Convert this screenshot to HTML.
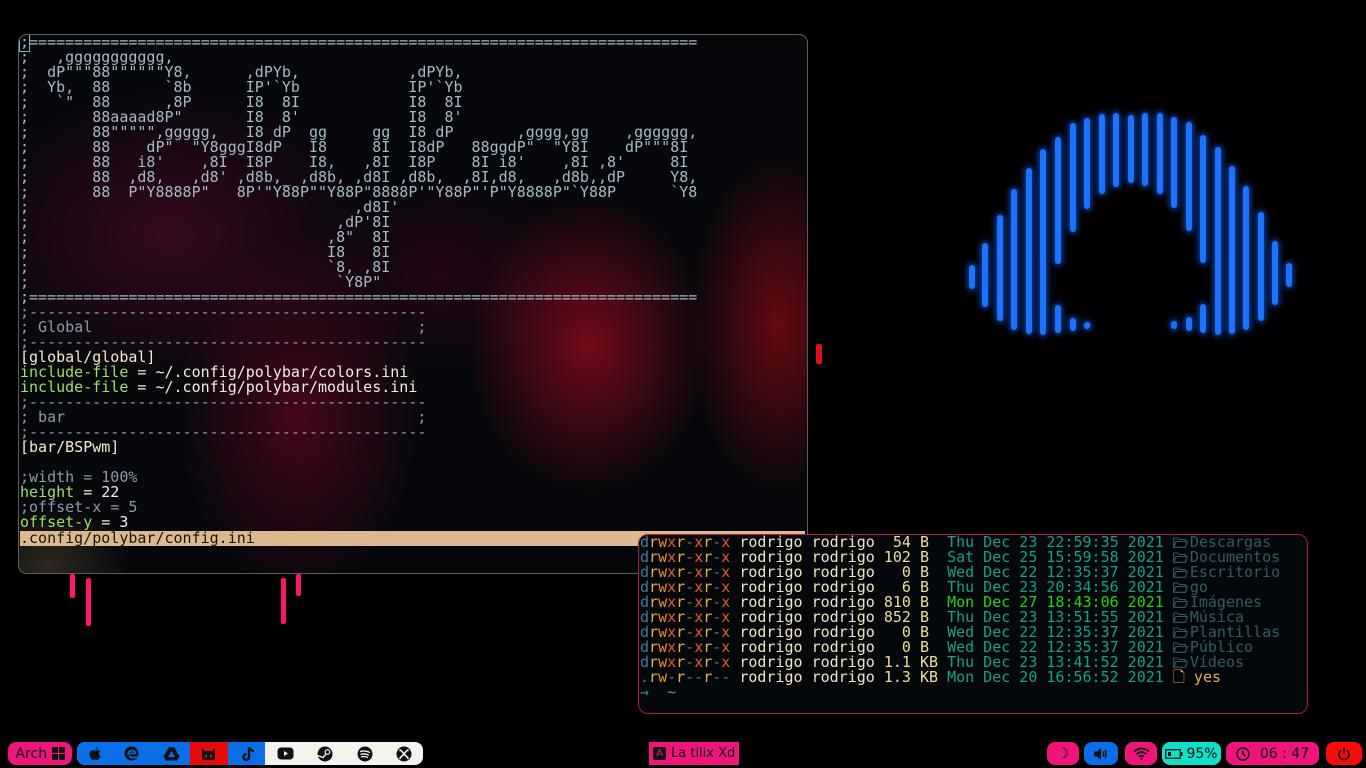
<!DOCTYPE html>
<html><head><meta charset="utf-8"><style>
*{margin:0;padding:0;box-sizing:border-box}
body{width:1366px;height:768px;background:#000;overflow:hidden;position:relative;font-family:"DejaVu Sans Mono","Liberation Mono",monospace}
pre{font-family:"DejaVu Sans Mono","Liberation Mono",monospace;font-size:15px;line-height:15px;position:absolute;white-space:pre}
#t1{position:absolute;left:18px;top:34px;width:790px;height:540px;border:1.5px solid #5c5c5c;border-radius:9px;overflow:hidden;
background:
radial-gradient(ellipse 120px 150px at 570px 310px,rgba(150,10,30,.75),transparent),
radial-gradient(ellipse 90px 170px at 760px 290px,rgba(140,10,20,.7),transparent),
radial-gradient(ellipse 200px 150px at 150px 200px,rgba(90,10,45,.55),transparent),
radial-gradient(ellipse 120px 180px at 280px 380px,rgba(110,5,40,.6),transparent),
radial-gradient(ellipse 150px 100px at 420px 240px,rgba(60,5,30,.5),transparent),
radial-gradient(ellipse 80px 60px at 30px 530px,rgba(120,100,70,.35),transparent),
#07080c}
.a{color:#a4b9c8}.c{color:#8a9bab}.g{color:#9be16a}.w{color:#efeee6}.y{color:#f3ead0}
#sb{position:absolute;left:1px;top:496px;width:785px;height:15px;background:#dcb88e}
#t2{position:absolute;left:638px;top:534px;width:670px;height:180px;border:1.5px solid #b0154d;border-radius:10px;background:#05080b;overflow:hidden}
.pd{color:#3b7f9c}.pr{color:#e6b04a}.pw{color:#f08a2a}.px{color:#e85a2a}.pm{color:#6f6f6f}.u{color:#f1e4c4}.s{color:#f0dca0}.dt{color:#14a08a}.dg{color:#22d411}.fd{color:#2f5c68}.fy{color:#e4a664}
.f{display:inline-block;width:15px;height:11px;vertical-align:-1px;margin-right:2px}
.bar{position:absolute;width:6px;border-radius:3px;background:#1a72ff;box-shadow:0 0 6px 2px rgba(20,100,255,.6)}
.pk{position:absolute;background:#ff1470;width:5px;border-radius:2px}
.pill{position:absolute;top:742px;height:23px;border-radius:8px;display:flex;align-items:center;justify-content:center;font-family:"DejaVu Sans","Liberation Sans",sans-serif;font-size:13px;color:#111}
.ic{position:absolute;top:745px;width:17px;height:17px;display:flex;align-items:center;justify-content:center}
</style></head><body>

<div id="t1">
<pre style="left:1px;top:0px"><span class="a"><span style="outline:1px solid #7fb0d0">;</span>==========================================================================
;   ,ggggggggggg,
;  dP"""88""""""Y8,      ,dPYb,            ,dPYb,
;  Yb,  88      `8b      IP'`Yb            IP'`Yb
;   `"  88      ,8P      I8  8I            I8  8I
;       88aaaad8P"       I8  8'            I8  8'
;       88""""",ggggg,   I8 dP  gg     gg  I8 dP       ,gggg,gg    ,gggggg,
;       88    dP"  "Y8gggI8dP   I8     8I  I8dP   88ggdP"  "Y8I    dP"""8I
;       88   i8'    ,8I  I8P    I8,   ,8I  I8P    8I i8'    ,8I ,8'     8I
;       88  ,d8,   ,d8' ,d8b,_ ,d8b, ,d8I ,d8b,  ,8I,d8,   ,d8b,,dP     Y8,
;       88  P"Y8888P"   8P'"Y88P""Y88P"8888P'"Y88P"'P"Y8888P"`Y88P      `Y8
;                                    ,d8I'
;                                  ,dP'8I
;                                 ,8"  8I
;                                 I8   8I
;                                 `8, ,8I
;                                  `Y8P"
;==========================================================================</span>
<span class="c">;--------------------------------------------
; Global                                    ;
;--------------------------------------------</span>
<span class="y">[global/global]</span>
<span class="g">include-file</span> <span class="w">= ~/.config/polybar/colors.ini</span>
<span class="g">include-file</span> <span class="w">= ~/.config/polybar/modules.ini</span>
<span class="c">;--------------------------------------------
; bar                                       ;
;--------------------------------------------</span>
<span class="y">[bar/BSPwm]</span>

<span class="c">;width = 100%</span>
<span class="g">height</span> <span class="w">= 22</span>
<span class="c">;offset-x = 5</span>
<span class="g">offset-y</span> <span class="w">= 3</span></pre>
<div id="sb"></div>
<pre style="left:1px;top:496px;color:#1a1410">.config/polybar/config.ini</pre>
</div>

<div class="pk" style="left:70px;top:574px;height:24px"></div>
<div class="pk" style="left:86px;top:578px;height:48px"></div>
<div class="pk" style="left:281px;top:578px;height:46px"></div>
<div class="pk" style="left:296px;top:574px;height:22px"></div>
<div class="pk" style="left:816px;top:344px;height:20px;background:#e0101a;width:6px"></div>

<svg width="0" height="0" style="position:absolute"><defs><symbol id="fo" viewBox="0 0 15 11"><path d="M0.7 1V10.3H12.5L14.3 4.5H3L0.7 10.3M0.7 1H5L6.3 2.5H12.3V4.5" fill="none" stroke="#2f5c68" stroke-width="1.1"/></symbol></defs></svg>

<div id="t2">
<pre style="left:1px;top:0px"><span class="pd">d</span><span class="pr">r</span><span class="pw">w</span><span class="px">x</span><span class="pr">r</span><span class="pm">-</span><span class="px">x</span><span class="pr">r</span><span class="pm">-</span><span class="px">x</span> <span class="u">rodrigo rodrigo</span> <span class="s"> 54 B </span> <span class="dt">Thu Dec 23 22:59:35 2021</span> <svg class="f"><use href="#fo"/></svg><span class="fd">Descargas</span>
<span class="pd">d</span><span class="pr">r</span><span class="pw">w</span><span class="px">x</span><span class="pr">r</span><span class="pm">-</span><span class="px">x</span><span class="pr">r</span><span class="pm">-</span><span class="px">x</span> <span class="u">rodrigo rodrigo</span> <span class="s">102 B </span> <span class="dt">Sat Dec 25 15:59:58 2021</span> <svg class="f"><use href="#fo"/></svg><span class="fd">Documentos</span>
<span class="pd">d</span><span class="pr">r</span><span class="pw">w</span><span class="px">x</span><span class="pr">r</span><span class="pm">-</span><span class="px">x</span><span class="pr">r</span><span class="pm">-</span><span class="px">x</span> <span class="u">rodrigo rodrigo</span> <span class="s">  0 B </span> <span class="dt">Wed Dec 22 12:35:37 2021</span> <svg class="f"><use href="#fo"/></svg><span class="fd">Escritorio</span>
<span class="pd">d</span><span class="pr">r</span><span class="pw">w</span><span class="px">x</span><span class="pr">r</span><span class="pm">-</span><span class="px">x</span><span class="pr">r</span><span class="pm">-</span><span class="px">x</span> <span class="u">rodrigo rodrigo</span> <span class="s">  6 B </span> <span class="dt">Thu Dec 23 20:34:56 2021</span> <svg class="f"><use href="#fo"/></svg><span class="fd">go</span>
<span class="pd">d</span><span class="pr">r</span><span class="pw">w</span><span class="px">x</span><span class="pr">r</span><span class="pm">-</span><span class="px">x</span><span class="pr">r</span><span class="pm">-</span><span class="px">x</span> <span class="u">rodrigo rodrigo</span> <span class="s">810 B </span> <span class="dg">Mon Dec 27 18:43:06 2021</span> <svg class="f"><use href="#fo"/></svg><span class="fd">Imágenes</span>
<span class="pd">d</span><span class="pr">r</span><span class="pw">w</span><span class="px">x</span><span class="pr">r</span><span class="pm">-</span><span class="px">x</span><span class="pr">r</span><span class="pm">-</span><span class="px">x</span> <span class="u">rodrigo rodrigo</span> <span class="s">852 B </span> <span class="dt">Thu Dec 23 13:51:55 2021</span> <svg class="f"><use href="#fo"/></svg><span class="fd">Música</span>
<span class="pd">d</span><span class="pr">r</span><span class="pw">w</span><span class="px">x</span><span class="pr">r</span><span class="pm">-</span><span class="px">x</span><span class="pr">r</span><span class="pm">-</span><span class="px">x</span> <span class="u">rodrigo rodrigo</span> <span class="s">  0 B </span> <span class="dt">Wed Dec 22 12:35:37 2021</span> <svg class="f"><use href="#fo"/></svg><span class="fd">Plantillas</span>
<span class="pd">d</span><span class="pr">r</span><span class="pw">w</span><span class="px">x</span><span class="pr">r</span><span class="pm">-</span><span class="px">x</span><span class="pr">r</span><span class="pm">-</span><span class="px">x</span> <span class="u">rodrigo rodrigo</span> <span class="s">  0 B </span> <span class="dt">Wed Dec 22 12:35:37 2021</span> <svg class="f"><use href="#fo"/></svg><span class="fd">Público</span>
<span class="pd">d</span><span class="pr">r</span><span class="pw">w</span><span class="px">x</span><span class="pr">r</span><span class="pm">-</span><span class="px">x</span><span class="pr">r</span><span class="pm">-</span><span class="px">x</span> <span class="u">rodrigo rodrigo</span> <span class="s">1.1 KB</span> <span class="dt">Thu Dec 23 13:41:52 2021</span> <svg class="f"><use href="#fo"/></svg><span class="fd">Vídeos</span>
<span class="pm">.</span><span class="pr">r</span><span class="pw">w</span><span class="pm">-</span><span class="pr">r</span><span class="pm">--</span><span class="pr">r</span><span class="pm">--</span> <span class="u">rodrigo rodrigo</span> <span class="s">1.3 KB</span> <span class="dt">Mon Dec 20 16:56:52 2021</span> <span class="fy">🗋 yes</span>
<span style="color:#2a8ab0">→</span>  <span style="color:#7a8a99">~</span></pre>
</div>

<div style="position:absolute;left:0;top:0">
<div class="bar" style="left:969px;top:265px;height:24px"></div>
<div class="bar" style="left:982px;top:243px;height:64px"></div>
<div class="bar" style="left:997px;top:215px;height:106px"></div>
<div class="bar" style="left:1011px;top:189px;height:141px"></div>
<div class="bar" style="left:1026px;top:168px;height:166px"></div>
<div class="bar" style="left:1040px;top:149px;height:186px"></div>
<div class="bar" style="left:1055px;top:137px;height:127px"></div>
<div class="bar" style="left:1055px;top:305px;height:28px"></div>
<div class="bar" style="left:1070px;top:123px;height:109px"></div>
<div class="bar" style="left:1070px;top:318px;height:13px"></div>
<div class="bar" style="left:1084px;top:118px;height:91px"></div>
<div class="bar" style="left:1084px;top:322px;height:7px"></div>
<div class="bar" style="left:1099px;top:114px;height:80px"></div>
<div class="bar" style="left:1113px;top:113px;height:74px"></div>
<div class="bar" style="left:1128px;top:115px;height:68px"></div>
<div class="bar" style="left:1142px;top:113px;height:73px"></div>
<div class="bar" style="left:1157px;top:113px;height:81px"></div>
<div class="bar" style="left:1171px;top:117px;height:91px"></div>
<div class="bar" style="left:1171px;top:321px;height:8px"></div>
<div class="bar" style="left:1186px;top:122px;height:109px"></div>
<div class="bar" style="left:1186px;top:317px;height:14px"></div>
<div class="bar" style="left:1200px;top:135px;height:128px"></div>
<div class="bar" style="left:1200px;top:304px;height:29px"></div>
<div class="bar" style="left:1215px;top:147px;height:188px"></div>
<div class="bar" style="left:1229px;top:166px;height:168px"></div>
<div class="bar" style="left:1243px;top:186px;height:144px"></div>
<div class="bar" style="left:1258px;top:212px;height:109px"></div>
<div class="bar" style="left:1272px;top:241px;height:64px"></div>
<div class="bar" style="left:1286px;top:263px;height:24px"></div>
</div>

<!-- left bar -->
<div class="pill" style="left:8px;width:64px;background:#f0157a;font-size:14px">Arch&nbsp;<span style="display:inline-grid;grid-template-columns:6px 6px;gap:1px"><i style="width:6px;height:6px;background:#111"></i><i style="width:6px;height:6px;background:#111"></i><i style="width:6px;height:6px;background:#111"></i><i style="width:6px;height:6px;background:#111"></i></span></div>
<div class="pill" style="left:77px;width:346px;background:#f4f4ee"></div>
<div style="position:absolute;left:77px;top:742px;width:188px;height:23px;background:#0a6ee8;border-radius:8px 0 0 8px"></div>
<div style="position:absolute;left:190px;top:742px;width:38px;height:23px;background:#e60b0b"></div>
<div class="ic" style="left:86px"><svg width="14" height="15" viewBox="0 0 14 15"><path d="M7 4C8 3 9 1 9.5 0.5C10 2 9 3.5 7 4ZM7 5C5 3.5 1.5 4 1.5 8C1.5 11 3.5 14 5 14C6 14 6 13.5 7 13.5C8 13.5 8 14 9 14C10.5 14 12 12 12.5 10C10.5 9 10.5 6 12.3 5.3C11 3.5 8.5 4 7 5Z" fill="#111"/></svg></div>
<div class="ic" style="left:123px"><svg width="15" height="15" viewBox="0 0 15 15"><circle cx="7.5" cy="7.5" r="7" fill="#111"/><path d="M4 9C4 6 6 4.5 8 4.5C10 4.5 11.5 6 11 7.5H5.5" stroke="#0a6ee8" stroke-width="1.6" fill="none"/><path d="M5.5 9.5C6 12 10 12.5 13 10.5" stroke="#0a6ee8" stroke-width="1.6" fill="none"/></svg></div>
<div class="ic" style="left:163px"><svg width="17" height="15" viewBox="0 0 17 15"><path d="M6 1H11L16.5 10.5L14 14.5H3L0.5 10.5Z" fill="#111"/><path d="M8.5 5L5 11H12Z" fill="#0a6ee8"/></svg></div>
<div class="ic" style="left:200px"><svg width="17" height="14" viewBox="0 0 17 14"><path d="M2 1L5 4H12L15 1V13H2Z" fill="#111"/><circle cx="6" cy="9" r="1.3" fill="#e60b0b"/><circle cx="11" cy="9" r="1.3" fill="#e60b0b"/></svg></div>
<div class="ic" style="left:240px"><svg width="14" height="16" viewBox="0 0 14 16"><path d="M7 1V11A2.8 2.8 0 1 1 4.2 8.2" stroke="#111" stroke-width="2.4" fill="none"/><path d="M7.5 1.5C8 3.5 10 5 12 5" stroke="#111" stroke-width="2.2" fill="none"/></svg></div>
<div class="ic" style="left:277px"><svg width="17" height="13" viewBox="0 0 17 13"><rect x="0.5" y="0.5" width="16" height="12" rx="3.5" fill="#111"/><path d="M7 4V9L11 6.5Z" fill="#f4f4ee"/></svg></div>
<div class="ic" style="left:316px"><svg width="16" height="16" viewBox="0 0 16 16"><circle cx="8" cy="8" r="7.5" fill="#111"/><circle cx="10.5" cy="6" r="2.3" fill="none" stroke="#f4f4ee" stroke-width="1.2"/><path d="M0.5 9.5L6 11.5L9 8" stroke="#f4f4ee" stroke-width="1.4" fill="none"/></svg></div>
<div class="ic" style="left:356px"><svg width="16" height="16" viewBox="0 0 16 16"><circle cx="8" cy="8" r="7.5" fill="#111"/><path d="M3.5 5.5C6.5 4.5 9.5 4.8 12.5 6.3M4 8.3C6.5 7.6 9 7.9 11.5 9M4.5 10.8C6.5 10.3 8.5 10.5 10.5 11.4" stroke="#f4f4ee" stroke-width="1.3" fill="none" stroke-linecap="round"/></svg></div>
<div class="ic" style="left:395px"><svg width="16" height="16" viewBox="0 0 16 16"><circle cx="8" cy="8" r="7.5" fill="#111"/><path d="M3.5 3.5C6 5 7 6.5 8 8C9 6.5 10 5 12.5 3.5M3.5 13C5 10.5 6.5 9.5 8 8C9.5 9.5 11 10.5 12.5 13" stroke="#f4f4ee" stroke-width="1.6" fill="none"/></svg></div>

<!-- center -->
<div style="position:absolute;left:649px;top:742px;width:90px;height:23px;background:#f0157a;font-family:'DejaVu Sans','Liberation Sans',sans-serif;font-size:13px;color:#111;display:flex;align-items:center;padding-left:4px"><span style="display:inline-flex;width:13px;height:13px;background:#111;border-radius:2px;color:#f0157a;font-size:10px;align-items:center;justify-content:center;margin-right:5px">A</span>La tilix Xd</div>

<!-- right -->
<div class="pill" style="left:1047px;width:32px;background:#f0157a;font-size:14px;font-weight:bold">☽</div>
<div class="pill" style="left:1084px;width:34px;background:#0a6ee8"><svg width="16" height="14" viewBox="0 0 16 14"><path d="M1 4.5H4L8 1V13L4 9.5H1Z" fill="#111"/><path d="M10 4.5Q11.5 7 10 9.5M12 3Q14.5 7 12 11" stroke="#111" stroke-width="1.5" fill="none"/></svg></div>
<div class="pill" style="left:1125px;width:32px;background:#f0157a"><svg width="17" height="13" viewBox="0 0 17 13"><path d="M1 4.5Q8.5 -1.5 16 4.5M3.5 7.2Q8.5 3 13.5 7.2M6 9.8Q8.5 7.5 11 9.8" stroke="#111" stroke-width="1.8" fill="none"/><circle cx="8.5" cy="11.8" r="1.2" fill="#111"/></svg></div>
<div class="pill" style="left:1162px;width:59px;background:#0fe0c8;font-size:14px"><svg width="18" height="10" viewBox="0 0 18 10" style="margin-right:3px"><rect x="0.7" y="0.7" width="14.6" height="8.6" fill="none" stroke="#111" stroke-width="1.3"/><rect x="3" y="3" width="3" height="4" fill="#111"/><rect x="15.5" y="3" width="2" height="4" fill="#111"/></svg>95%</div>
<div class="pill" style="left:1226px;width:93px;background:#f0157a;font-size:14px"><svg width="14" height="14" viewBox="0 0 14 14" style="margin-right:10px"><circle cx="7" cy="7" r="6" fill="none" stroke="#111" stroke-width="1.4"/><path d="M7 3.5V7L9.5 9" stroke="#111" stroke-width="1.4" fill="none"/></svg>06 : 47</div>
<div class="pill" style="left:1326px;width:36px;background:#ff0a0a"><svg width="14" height="14" viewBox="0 0 14 14"><path d="M4 3.5A5 5 0 1 0 10 3.5" stroke="#111" stroke-width="1.8" fill="none"/><path d="M7 1V7" stroke="#111" stroke-width="1.8"/></svg></div>
</body></html>
